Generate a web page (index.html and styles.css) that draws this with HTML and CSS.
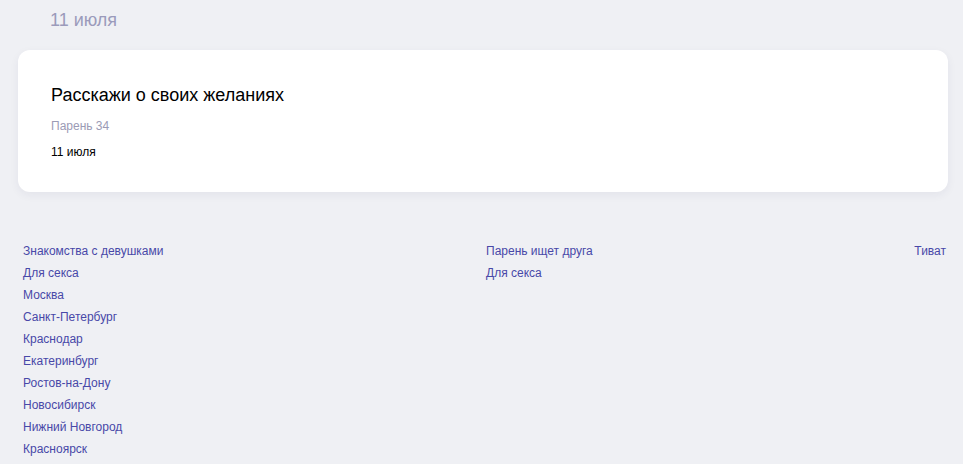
FILE: index.html
```html
<!DOCTYPE html>
<html lang="ru">
<head>
<meta charset="utf-8">
<link rel="stylesheet" href="styles.css">
</head>
<body>
<div class="page">
  <h2 class="day">11 июля</h2>
  <div class="card">
    <h3 class="card-title">Расскажи о своих желаниях</h3>
    <div class="card-author">Парень 34</div>
    <div class="card-date">11 июля</div>
  </div>
  <footer class="links">
    <ul class="col">
      <li><a href="#">Знакомства с девушками</a></li>
      <li><a href="#">Для секса</a></li>
      <li><a href="#">Москва</a></li>
      <li><a href="#">Санкт-Петербург</a></li>
      <li><a href="#">Краснодар</a></li>
      <li><a href="#">Екатеринбург</a></li>
      <li><a href="#">Ростов-на-Дону</a></li>
      <li><a href="#">Новосибирск</a></li>
      <li><a href="#">Нижний Новгород</a></li>
      <li><a href="#">Красноярск</a></li>
    </ul>
    <ul class="col">
      <li><a href="#">Парень ищет друга</a></li>
      <li><a href="#">Для секса</a></li>
    </ul>
    <ul class="col col-right">
      <li><a href="#">Тиват</a></li>
    </ul>
  </footer>
</div>
</body>
</html>
```
FILE: styles.css
```css
* { box-sizing: border-box; }
html, body {
  margin: 0;
  padding: 0;
  background: #eff0f4;
  font-family: "Liberation Sans", Arial, sans-serif;
}
.page {
  padding: 0 15px 0 18px;
}
.day {
  margin: 0;
  padding: 10px 0 0 32px;
  height: 50px;
  font-size: 18px;
  font-weight: normal;
  line-height: 21px;
  color: #9b9bbb;
}
.card {
  background: #fff;
  border-radius: 12px;
  box-shadow: 0 3px 10px rgba(40, 40, 80, 0.06);
  height: 142px;
  padding: 35px 33px 0 33px;
}
.card-title {
  margin: 0;
  font-size: 18px;
  font-weight: normal;
  line-height: 21px;
  color: #000;
}
.card-author {
  margin-top: 13px;
  font-size: 12px;
  line-height: 14px;
  color: #9b9bb5;
}
.card-date {
  margin-top: 12px;
  font-size: 12px;
  line-height: 14px;
  color: #000;
}
.links {
  display: grid;
  grid-template-columns: 463px 1fr auto;
  padding: 48px 2px 0 5px;
}
.col {
  list-style: none;
  margin: 0;
  padding: 0;
}
.col li {
  font-size: 12px;
  line-height: 22px;
}
.col-right { text-align: right; }
.col a {
  color: #4848a8;
  text-decoration: none;
}
```
